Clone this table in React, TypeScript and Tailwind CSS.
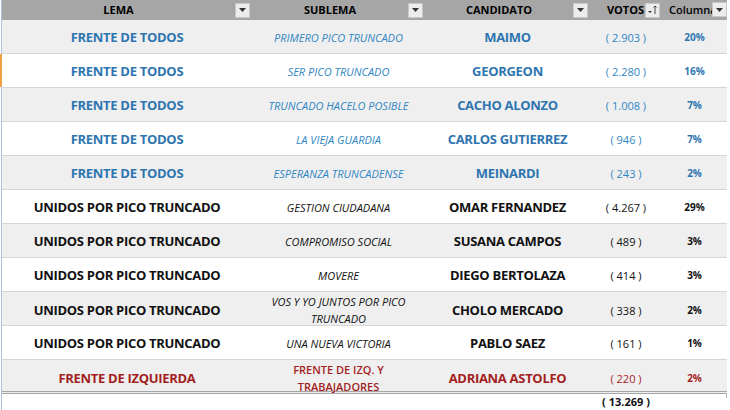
import React from "react";

type Row = { lema: string; sub: string[]; cand: string; votos: string; pct: string; color: "blue" | "black" | "red" };

const rows: Row[] = [
  { lema: "FRENTE DE TODOS", sub: ["PRIMERO PICO TRUNCADO"], cand: "MAIMO", votos: "( 2.903 )", pct: "20%", color: "blue" },
  { lema: "FRENTE DE TODOS", sub: ["SER PICO TRUNCADO"], cand: "GEORGEON", votos: "( 2.280 )", pct: "16%", color: "blue" },
  { lema: "FRENTE DE TODOS", sub: ["TRUNCADO HACELO POSIBLE"], cand: "CACHO ALONZO", votos: "( 1.008 )", pct: "7%", color: "blue" },
  { lema: "FRENTE DE TODOS", sub: ["LA VIEJA GUARDIA"], cand: "CARLOS GUTIERREZ", votos: "( 946 )", pct: "7%", color: "blue" },
  { lema: "FRENTE DE TODOS", sub: ["ESPERANZA TRUNCADENSE"], cand: "MEINARDI", votos: "( 243 )", pct: "2%", color: "blue" },
  { lema: "UNIDOS POR PICO TRUNCADO", sub: ["GESTION CIUDADANA"], cand: "OMAR FERNANDEZ", votos: "( 4.267 )", pct: "29%", color: "black" },
  { lema: "UNIDOS POR PICO TRUNCADO", sub: ["COMPROMISO SOCIAL"], cand: "SUSANA CAMPOS", votos: "( 489 )", pct: "3%", color: "black" },
  { lema: "UNIDOS POR PICO TRUNCADO", sub: ["MOVERE"], cand: "DIEGO BERTOLAZA", votos: "( 414 )", pct: "3%", color: "black" },
  { lema: "UNIDOS POR PICO TRUNCADO", sub: ["VOS Y YO JUNTOS POR PICO", "TRUNCADO"], cand: "CHOLO MERCADO", votos: "( 338 )", pct: "2%", color: "black" },
  { lema: "UNIDOS POR PICO TRUNCADO", sub: ["UNA NUEVA VICTORIA"], cand: "PABLO SAEZ", votos: "( 161 )", pct: "1%", color: "black" },
  { lema: "FRENTE DE IZQUIERDA", sub: ["FRENTE DE IZQ. Y", "TRABAJADORES"], cand: "ADRIANA ASTOLFO", votos: "( 220 )", pct: "2%", color: "red" },
];

const font = { fontFamily: "'Open Sans', 'Liberation Sans', sans-serif" };

function DropBtn() {
  return (
    <div className="flex h-[15px] w-[15px] items-center justify-center border border-[#c8c8c8] bg-[#ececec]">
      <svg width="7" height="4" viewBox="0 0 7 4">
        <path d="M0 0 L7 0 L3.5 4 Z" fill="#333" />
      </svg>
    </div>
  );
}

function SortBtn() {
  return (
    <div className="flex h-[15px] w-[15px] items-center justify-center border border-[#c8c8c8] bg-[#ececec]">
      <svg width="11" height="10" viewBox="0 0 11 10">
        <path d="M1 6 L5 6 L3 8 Z" fill="#333" />
        <path d="M8 1 L8 9 M6.5 2.5 L8 1 L9.5 2.5" stroke="#333" strokeWidth="0.9" fill="none" />
      </svg>
    </div>
  );
}

export default function App() {
  return (
    <div className="relative h-[410px] w-[730px] overflow-hidden bg-white" style={font}>
      <div className="absolute left-[1px] top-0 h-full w-[1px] bg-[#a9c3e6]" />
      <div className="absolute left-[726px] top-0 h-[398px] w-[1px] bg-[#b8b8b8]" />
      <div className="ml-[2px] w-[725px]">
        {/* header */}
        <div className="relative grid h-[20px] grid-cols-[250px_173px_165px_72px_65px] bg-[#a6a6a6] text-[11px] font-bold text-black">
          <div className="flex items-center">
            <div className="flex-1 text-center">LEMA</div>
            <div className="mr-[2px]"><DropBtn /></div>
          </div>
          <div className="flex items-center">
            <div className="flex-1 text-center">SUBLEMA</div>
            <div className="mr-[2px]"><DropBtn /></div>
          </div>
          <div className="flex items-center">
            <div className="flex-1 text-center">CANDIDATO</div>
            <div className="mr-[2px]"><DropBtn /></div>
          </div>
          <div className="flex items-center justify-end">
            <div className="mr-[1px]">VOTOS</div>
            <div className="mr-[2px]"><SortBtn /></div>
          </div>
          <div className="flex items-center overflow-hidden">
            <div className="ml-[7px] flex-1 overflow-hidden whitespace-nowrap font-semibold">Columna</div>
          </div>
          <div className="absolute left-[710px] top-[2px]"><DropBtn /></div>
        </div>
        {rows.map((r, i) => {
          const bg = i % 2 === 0 ? "bg-[#efefef]" : "bg-white";
          const lemaC = r.color === "blue" ? "text-[#2e75b0]" : r.color === "red" ? "text-[#a31f1f]" : "text-[#111]";
          const subC = r.color === "blue" ? "text-[#2f86c4] italic" : r.color === "red" ? "text-[#a31f1f] font-semibold" : "text-[#111] italic";
          const vC = r.color === "blue" ? "text-[#2f86c4]" : r.color === "red" ? "text-[#a31f1f]" : "text-[#111]";
          const pC = r.color === "blue" ? "text-[#2e75b0]" : r.color === "red" ? "text-[#a31f1f]" : "text-[#111]";
          const last = i === rows.length - 1;
          return (
            <div
              key={i}
              className={`relative grid h-[34px] grid-cols-[250px_173px_165px_72px_65px] items-center ${bg} ${last ? "border-b-[3px] border-double border-[#a6a6a6]" : "border-b border-[#d6d6d6]"}`}
            >
              {i === 1 && <div className="absolute left-[-2px] top-0 h-full w-[2px] bg-[#f0a040]" />}
              <div className={`pt-[3px] text-center text-[13px] font-bold tracking-[-0.3px] ${lemaC}`}>{r.lema}</div>
              <div className={`pt-[1px] text-center text-[11px] leading-[17px] ${subC}`}>
                {r.sub.map((s, j) => (
                  <div key={j}>{s}</div>
                ))}
              </div>
              <div className={`pt-[3px] text-center text-[13px] font-bold tracking-[-0.3px] ${lemaC}`}>{r.cand}</div>
              <div className={`pt-[3px] text-center text-[11px] ${vC}`}>{r.votos}</div>
              <div className={`pt-[2px] text-center text-[10px] font-bold ${pC}`}>{r.pct}</div>
            </div>
          );
        })}
        <div className="grid h-[16px] grid-cols-[250px_173px_165px_72px_65px] items-center">
          <div />
          <div />
          <div />
          <div className="text-center text-[11px] font-bold leading-[16px] text-[#111]">( 13.269 )</div>
          <div />
        </div>
      </div>
    </div>
  );
}
